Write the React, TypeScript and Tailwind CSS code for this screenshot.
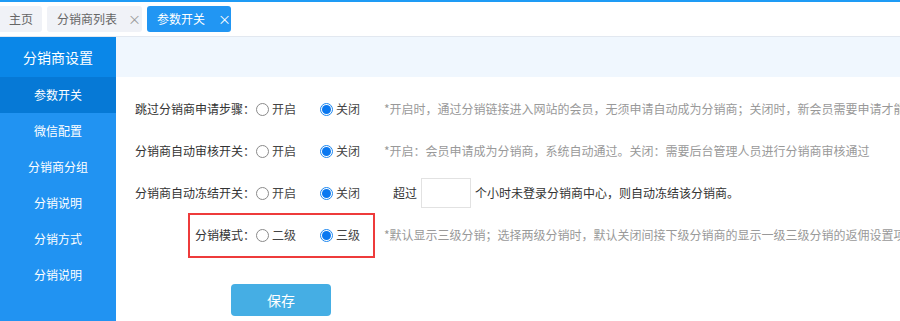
import React from "react";

const font = { fontFamily: '"Noto Sans CJK SC", "Noto Sans", sans-serif' };

function Radio({ checked, label }: { checked?: boolean; label: string }) {
  return (
    <span className="flex items-center">
      {checked ? (
        <span className="w-[13px] h-[13px] rounded-full border border-[#1e88f0] flex items-center justify-center shrink-0">
          <span className="w-[9px] h-[9px] rounded-full bg-[#0a78f0]" />
        </span>
      ) : (
        <span className="w-[13px] h-[13px] rounded-full border border-[#8a8a8a] bg-white shrink-0" />
      )}
      <span className="ml-[3px] text-[#444]">{label}</span>
    </span>
  );
}

function Row({
  label,
  a,
  b,
  children,
}: {
  label: string;
  a: string;
  b: string;
  children?: React.ReactNode;
}) {
  return (
    <div className="h-[42px] flex items-center">
      <div className="w-[139px] shrink-0 text-right text-[#333] whitespace-nowrap">{label}</div>
      <div className="w-[64px] shrink-0 ml-[1px]">
        <Radio label={a} />
      </div>
      <div className="w-[63px] shrink-0">
        <Radio label={b} checked />
      </div>
      {children}
    </div>
  );
}

export default function App() {
  const menu = ["参数开关", "微信配置", "分销商分组", "分销说明", "分销方式", "分销说明"];
  return (
    <div className="w-[900px] h-[321px] overflow-hidden bg-white flex flex-col text-[12px]" style={font}>
      <div className="h-[2px] shrink-0 bg-[#1e9bf5]" />
      <div className="h-[35px] shrink-0 flex items-start pt-[4px] gap-[5px] border-b border-[#e2e8f0]">
        <div className="h-[26px] w-[42px] shrink-0 rounded-r-[3px] bg-[#f0f2f7] flex items-center justify-center text-[#666] whitespace-nowrap">主页</div>
        <div className="h-[26px] w-[95px] shrink-0 rounded-[3px] bg-[#f0f2f7] flex items-center pl-[10px] text-[#666] whitespace-nowrap">
          分销商列表<span className="ml-[11px] text-[#999] text-[13px]">×</span>
        </div>
        <div className="h-[26px] w-[84px] shrink-0 rounded-[3px] bg-[#2196f3] flex items-center pl-[10px] text-white whitespace-nowrap">
          参数开关<span className="ml-[13px] text-[13px]">×</span>
        </div>
      </div>
      <div className="flex flex-1 min-h-0">
        <div className="w-[116px] shrink-0 bg-[#2193f2] flex flex-col text-white">
          <div className="h-[40px] bg-[#0a87e8] flex items-center justify-center text-[14px] whitespace-nowrap">分销商设置</div>
          {menu.map((m, i) => (
            <div
              key={i}
              className={`h-[36px] flex items-center justify-center whitespace-nowrap ${i === 0 ? "bg-[#0679d6]" : ""}`}
            >
              {m}
            </div>
          ))}
        </div>
        <div className="flex-1 min-w-0 overflow-hidden flex flex-col">
          <div className="h-[40px] shrink-0 bg-[#f0f7fe]" />
          <div className="pt-[11px] flex flex-col">
            <Row label="跳过分销商申请步骤：" a="开启" b="关闭">
              <span className="ml-[1px] text-[#999] whitespace-nowrap">
                *开启时，通过分销链接进入网站的会员，无须申请自动成为分销商；关闭时，新会员需要申请才能成为分销商
              </span>
            </Row>
            <Row label="分销商自动审核开关：" a="开启" b="关闭">
              <span className="ml-[1px] text-[#999] whitespace-nowrap">
                *开启：会员申请成为分销商，系统自动通过。关闭：需要后台管理人员进行分销商审核通过
              </span>
            </Row>
            <Row label="分销商自动冻结开关：" a="开启" b="关闭">
              <span className="ml-[10px] text-[#333] whitespace-nowrap">超过</span>
              <span className="ml-[4px] w-[50px] h-[30px] shrink-0 border border-[#e2e2e2] bg-white" />
              <span className="ml-[4px] text-[#333] whitespace-nowrap">个小时未登录分销商中心，则自动冻结该分销商。</span>
            </Row>
            <div className="relative">
              <Row label="分销模式：" a="二级" b="三级">
                <span className="ml-[1px] text-[#999] whitespace-nowrap">
                  *默认显示三级分销；选择两级分销时，默认关闭间接下级分销商的显示一级三级分销的返佣设置项
                </span>
              </Row>
              <div className="absolute left-[72px] top-[-1px] w-[187px] h-[45px] border-2 border-[#ee3b3b] pointer-events-none" />
            </div>
            <div className="pt-[28px] pl-[115px]">
              <button className="w-[100px] h-[32px] rounded-[4px] bg-[#45aee4] text-white text-[14px]" style={font}>
                保存
              </button>
            </div>
          </div>
        </div>
      </div>
    </div>
  );
}
